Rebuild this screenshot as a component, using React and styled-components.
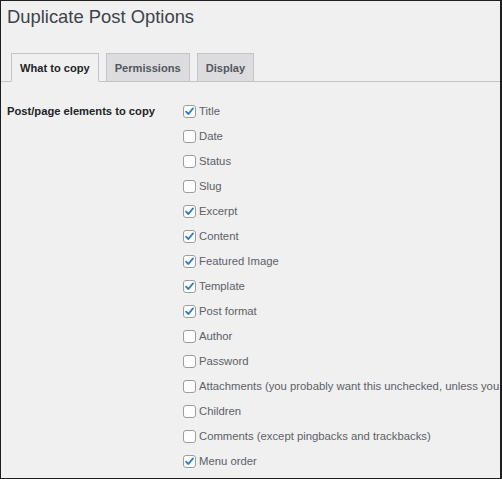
import React from 'react';
import styled, {createGlobalStyle} from 'styled-components';

const GlobalStyle = createGlobalStyle`
    html, body {
        margin: 0;
        padding: 0;
        background: #f0f0f1;
    }
    * {
        box-sizing: border-box;
    }
`;

const Frame = styled.div`
    width: 502px;
    height: 479px;
    border: 1px solid #1e1e1e;
    border-right-width: 2px;
    background: #f0f0f1;
    overflow: hidden;
    font-family: "Liberation Sans", Arial, sans-serif;
`;

const Title = styled.h1`
    margin: 0;
    padding: 4px 0 0 6px;
    font-size: 18.4px;
    font-weight: 400;
    line-height: 23px;
    color: #3c434a;
`;

const TabBar = styled.div`
    display: flex;
    gap: 7px;
    margin-top: 25px;
    padding-left: 10px;
    border-bottom: 1px solid #c3c4c7;
`;

const Tab = styled.div`
    height: 29px;
    padding: 0 8px;
    display: flex;
    align-items: center;
    margin-bottom: -1px;
    border: 1px solid #c3c4c7;
    border-bottom-color: ${p => (p.$active ? '#f0f0f1' : '#c3c4c7')};
    background: ${p => (p.$active ? '#f0f0f1' : '#dcdcde')};
    color: ${p => (p.$active ? '#1d2327' : '#50575e')};
    font-size: 11.1px;
    font-weight: 700;
`;

const Section = styled.div`
    display: grid;
    grid-template-columns: 176px 1fr;
    padding: 20px 0 0 6px;
`;

const FieldLabel = styled.div`
    font-size: 11.2px;
    font-weight: 700;
    color: #1d2327;
    line-height: 18px;
    white-space: nowrap;
`;

const OptionList = styled.div`
    display: flex;
    flex-direction: column;
    gap: 7px;
`;

const Option = styled.label`
    display: flex;
    align-items: center;
    gap: 3px;
    height: 18px;
    font-size: 11.3px;
    color: #5c6166;
    white-space: nowrap;
`;

const Box = styled.span`
    flex: none;
    width: 13px;
    height: 13px;
    border: 1px solid #9a9da1;
    border-radius: 3px;
    background: #fff;
    display: flex;
    align-items: center;
    justify-content: center;
`;

const Check = () => (
    <svg width="11" height="11" viewBox="0 0 11 11">
        <path d="M2 5.6 L4.4 8 L9 2.4" fill="none" stroke="#2f7bc0" strokeWidth="1.8" strokeLinecap="round" strokeLinejoin="round"/>
    </svg>
);

const options = [
    ['Title', true],
    ['Date', false],
    ['Status', false],
    ['Slug', false],
    ['Excerpt', true],
    ['Content', true],
    ['Featured Image', true],
    ['Template', true],
    ['Post format', true],
    ['Author', false],
    ['Password', false],
    ['Attachments (you probably want this unchecked, unless you have very special requirements)', false],
    ['Children', false],
    ['Comments (except pingbacks and trackbacks)', false],
    ['Menu order', true],
];

export default function App() {
    return (
        <Frame>
            <GlobalStyle/>
            <Title>Duplicate Post Options</Title>
            <TabBar>
                <Tab $active>What to copy</Tab>
                <Tab>Permissions</Tab>
                <Tab>Display</Tab>
            </TabBar>
            <Section>
                <FieldLabel>Post/page elements to copy</FieldLabel>
                <OptionList>
                    {options.map(([name, on]) => (
                        <Option key={name}>
                            <Box>{on && <Check/>}</Box>
                            {name}
                        </Option>
                    ))}
                </OptionList>
            </Section>
        </Frame>
    );
}
